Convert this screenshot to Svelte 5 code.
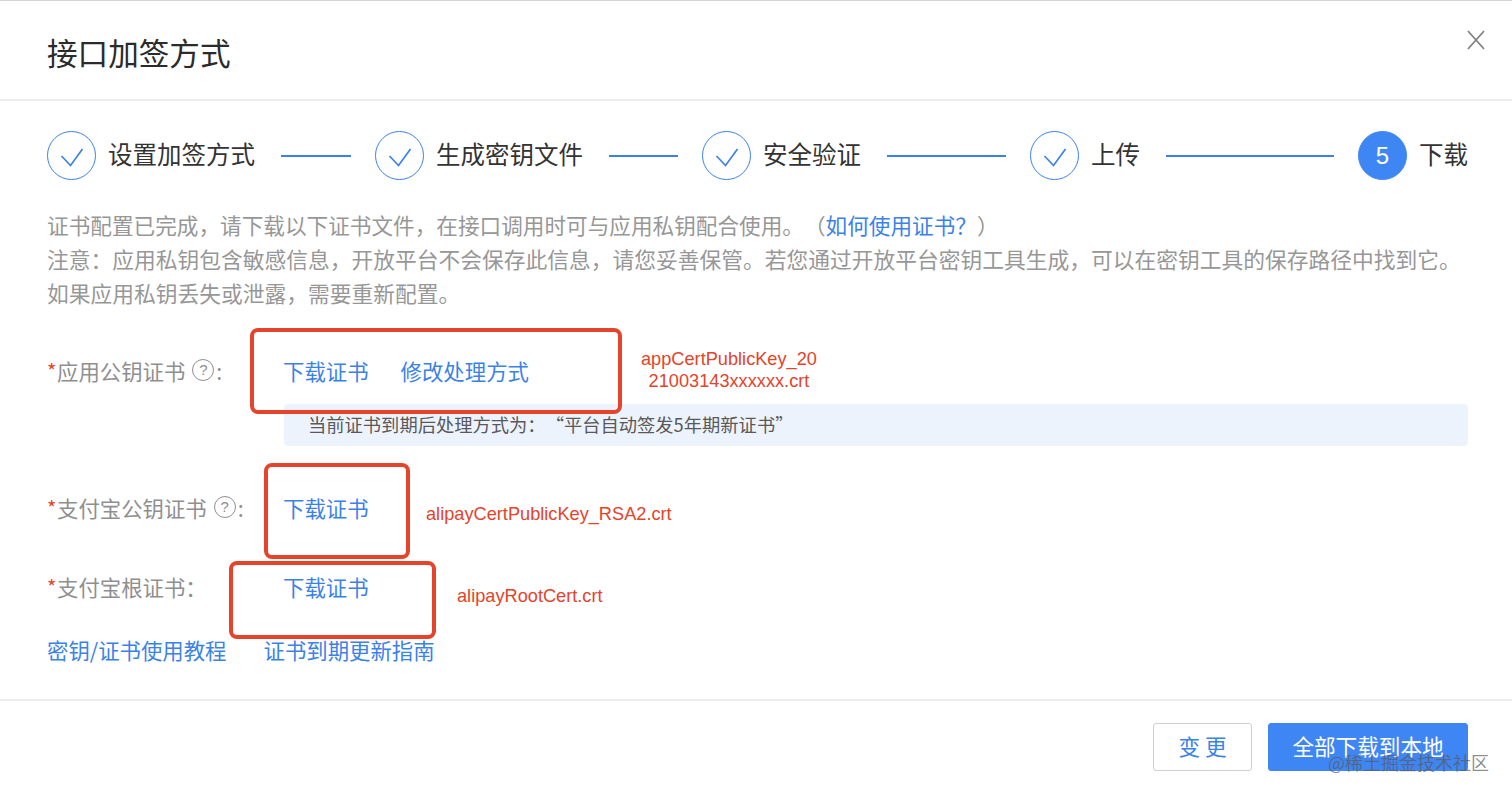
<script>
  const steps = [
    { label: "设置加签方式", done: true, line: 70 },
    { label: "生成密钥文件", done: true, line: 69 },
    { label: "安全验证", done: true, line: 119 },
    { label: "上传", done: true, line: 168 },
    { label: "下载", done: false, line: 0 }
  ];

  const marks = [
    { cls: "box-a" },
    { cls: "box-b" },
    { cls: "box-c" }
  ];
</script>

<div class="modal">
  <header class="head">
    <h1>接口加签方式</h1>
    <button class="close" type="button" aria-label="关闭">
      <svg width="18" height="20" viewBox="0 0 18 20"><path d="M1 1l16 18M17 1L1 19" fill="none" stroke="#7f7f7f" stroke-width="1.7" /></svg>
    </button>
  </header>

  <main class="body">
    <ol class="steps">
      {#each steps as step, i}
        <li class="step">
          {#if step.done}
            <span class="dot">
              <svg width="24" height="24" viewBox="0 0 24 24"><path d="M1.5 12l9 9.5L22.5 5" fill="none" stroke="#3b82e8" stroke-width="1.7" /></svg>
            </span>
          {:else}
            <span class="dot active">{i + 1}</span>
          {/if}
          <span class="step-label">{step.label}</span>
          {#if step.line}
            <span class="step-line" style="width: {step.line}px"></span>
          {/if}
        </li>
      {/each}
    </ol>

    <div class="desc">
      <p>证书配置已完成，请下载以下证书文件，在接口调用时可与应用私钥配合使用。（<a href="#top">如何使用证书？</a>）</p>
      <p>注意：应用私钥包含敏感信息，开放平台不会保存此信息，请您妥善保管。若您通过开放平台密钥工具生成，可以在密钥工具的保存路径中找到它。</p>
      <p>如果应用私钥丢失或泄露，需要重新配置。</p>
    </div>

    <div class="form">
      <div class="row row-app">
        <div class="label"><i>*</i>应用公钥证书<span class="help">?</span>:</div>
        <div class="links"><a href="#top">下载证书</a><a href="#top">修改处理方式</a></div>
      </div>
      <div class="notice">当前证书到期后处理方式为：“平台自动签发5年期新证书”</div>
      <div class="row row-pub">
        <div class="label"><i>*</i>支付宝公钥证书<span class="help">?</span>:</div>
        <div class="links"><a href="#top">下载证书</a></div>
      </div>
      <div class="row row-root">
        <div class="label"><i>*</i>支付宝根证书：</div>
        <div class="links"><a href="#top">下载证书</a></div>
      </div>
      <div class="guides">
        <a href="#top">密钥/证书使用教程</a>
        <a href="#top">证书到期更新指南</a>
      </div>
    </div>
  </main>

  <footer class="foot">
    <button class="btn" type="button">变 更</button>
    <button class="btn primary" type="button">全部下载到本地</button>
  </footer>

  <!-- annotations drawn over the screenshot -->
  {#each marks as mark}
    <span class="mark {mark.cls}"></span>
  {/each}
  <span class="note note-a">appCertPublicKey_20<br />21003143xxxxxx.crt</span>
  <span class="note note-b">alipayCertPublicKey_RSA2.crt</span>
  <span class="note note-c">alipayRootCert.crt</span>
  <span class="watermark">@稀土掘金技术社区</span>
</div>

<style>
  :global(body) {
    margin: 0;
    background: #fff;
  }

  .modal {
    position: relative;
    height: 796px;
    display: flex;
    flex-direction: column;
    overflow: hidden;
    border-top: 1px solid #d4d4d4;
    box-sizing: border-box;
    font-family: "Noto Sans CJK SC", "Liberation Sans", sans-serif;
    color: #333;
    text-spacing-trim: space-all;
  }

  a {
    color: #3b82e8;
    text-decoration: none;
  }

  .head {
    height: 98px;
    flex: none;
    display: flex;
    align-items: center;
    justify-content: space-between;
    padding: 0 27px 0 47px;
    border-bottom: 2px solid #ececec;
  }

  h1 {
    margin: 4px 0 0;
    font-size: 30.6px;
    font-weight: 400;
    color: #2b2b2b;
  }

  .close {
    border: none;
    background: none;
    padding: 0;
    margin-bottom: 20px;
    height: 20px;
  }

  .body {
    flex: 1;
    padding: 30px 44px 0 47px;
  }

  .steps {
    list-style: none;
    margin: 0;
    padding: 0;
    display: flex;
    gap: 24px;
    height: 49px;
  }

  .step {
    display: flex;
    align-items: center;
  }

  .dot {
    width: 49px;
    height: 49px;
    box-sizing: border-box;
    border: 1.5px solid #3b82e8;
    border-radius: 50%;
    display: flex;
    align-items: center;
    justify-content: center;
    flex: none;
  }

  .dot.active {
    background: #3f86f5;
    border-color: #3f86f5;
    color: #fff;
    font-size: 24px;
    font-family: "Liberation Sans", sans-serif;
  }

  .step-label {
    margin: 0 0 3px 12px;
    font-size: 24.5px;
    line-height: 46px;
    color: #333;
    white-space: nowrap;
  }

  .step-line {
    height: 2px;
    background: #3b82e8;
    margin-left: 26px;
  }

  .desc {
    margin-top: 28px;
    font-size: 21.75px;
    line-height: 34px;
    color: #979797;
    white-space: nowrap;
  }

  .desc p {
    margin: 0;
  }

  .desc p:first-child {
    font-size: 21.64px;
  }

  .form {
    font-size: 21.4px;
  }

  .row {
    display: flex;
    align-items: center;
    height: 34px;
    box-sizing: border-box;
    padding-bottom: 4px;
  }

  .row-app {
    margin-top: 45px;
  }

  .row-pub {
    margin-top: 46px;
  }

  .row-root {
    margin-top: 45px;
  }

  .label {
    width: 236px;
    flex: none;
    display: flex;
    align-items: center;
    color: #8f8f8f;
    white-space: nowrap;
  }

  .label i {
    color: #e8442a;
    font-style: normal;
    font-size: 20px;
    width: 10px;
  }

  .help {
    width: 22px;
    height: 22px;
    box-sizing: border-box;
    margin: 0 2px 0 7px;
    border: 1.5px solid #8f8f8f;
    border-radius: 50%;
    font-size: 15px;
    line-height: 19px;
    text-align: center;
    font-family: "Liberation Sans", sans-serif;
  }

  .links {
    display: flex;
    gap: 32px;
    white-space: nowrap;
  }

  .notice {
    margin: 15px 0 0 237px;
    height: 42px;
    box-sizing: border-box;
    padding-left: 24px;
    line-height: 41px;
    font-size: 18.3px;
    color: #595959;
    background: #edf3fc;
    border-radius: 4px;
    white-space: nowrap;
  }

  .guides {
    display: flex;
    gap: 37px;
    margin-top: 28px;
    line-height: 34px;
  }

  .foot {
    height: 97px;
    flex: none;
    box-sizing: border-box;
    border-top: 2px solid #ececec;
    display: flex;
    justify-content: flex-end;
    gap: 16px;
    padding: 22px 44px 0 0;
  }

  .btn {
    height: 48px;
    width: 99px;
    box-sizing: border-box;
    border: 1.5px solid #cfcfcf;
    border-radius: 3px;
    background: #fff;
    color: #3b82e8;
    font: inherit;
    font-size: 21.6px;
    padding: 0 0 3px;
  }

  .btn.primary {
    width: 200px;
    background: #3f86f5;
    border-color: #3f86f5;
    color: #fff;
  }

  .mark {
    position: absolute;
    box-sizing: border-box;
    border: 4px solid #e5432a;
    border-radius: 8px;
  }

  .box-a {
    left: 250px;
    top: 327px;
    width: 372px;
    height: 86px;
  }

  .box-b {
    left: 264px;
    top: 462px;
    width: 146px;
    height: 96px;
  }

  .box-c {
    left: 229px;
    top: 560px;
    width: 207px;
    height: 78px;
  }

  .note {
    position: absolute;
    font-family: "Liberation Sans", sans-serif;
    font-size: 18.2px;
    line-height: 22px;
    color: #e5432a;
    white-space: nowrap;
  }

  .note-a {
    left: 641px;
    top: 347px;
    text-align: center;
  }

  .note-b {
    left: 426px;
    top: 502px;
  }

  .note-c {
    left: 457px;
    top: 584px;
  }

  .watermark {
    position: absolute;
    left: 1328px;
    top: 748px;
    font-size: 18px;
    line-height: 26px;
    color: rgba(90, 90, 90, 0.7);
    white-space: nowrap;
  }
</style>
